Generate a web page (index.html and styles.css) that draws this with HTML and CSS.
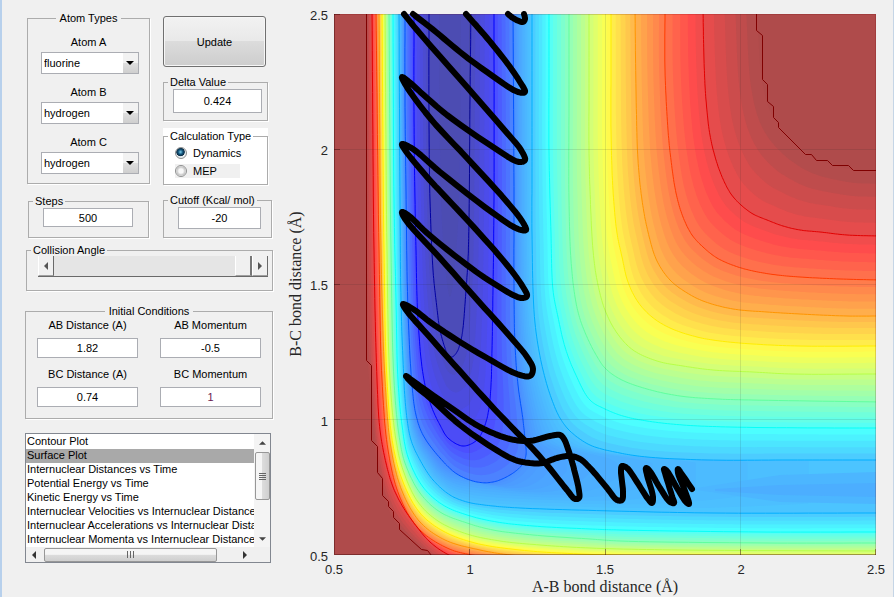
FILE: index.html
```html
<!DOCTYPE html>
<html lang="en">
<head>
<meta charset="utf-8">
<title>Reaction Dynamics</title>
<link rel="stylesheet" href="styles.css">
</head>
<body>
<main class="app">
  <form class="controls">
    <div class="pair">
      <fieldset class="group atoms">
        <legend class="centered">Atom Types</legend>
        <label for="atomA">Atom A</label>
        <span class="drop"><select id="atomA"><option>fluorine</option><option>hydrogen</option></select></span>
        <label for="atomB">Atom B</label>
        <span class="drop"><select id="atomB"><option>hydrogen</option><option>fluorine</option></select></span>
        <label for="atomC">Atom C</label>
        <span class="drop"><select id="atomC"><option>hydrogen</option><option>fluorine</option></select></span>
      </fieldset>
      <div class="side">
        <button type="button" class="update">Update</button>
        <fieldset class="group delta">
          <legend>Delta Value</legend>
          <input type="text" aria-label="Delta Value" value="0.424">
        </fieldset>
        <div class="white">
          <fieldset class="group calc">
            <legend>Calculation Type</legend>
            <label class="radio"><input type="radio" name="calc" checked>Dynamics</label>
            <label class="radio shaded"><input type="radio" name="calc">MEP</label>
          </fieldset>
        </div>
      </div>
    </div>
    <div class="pair second">
      <fieldset class="group steps">
        <legend>Steps</legend>
        <input type="text" aria-label="Steps" value="500">
      </fieldset>
      <fieldset class="group cutoff">
        <legend>Cutoff (Kcal/ mol)</legend>
        <input type="text" aria-label="Cutoff (Kcal/ mol)" value="-20">
      </fieldset>
    </div>
    <fieldset class="group angle">
      <legend>Collision Angle</legend>
      <div class="slider">
        <button type="button" aria-label="Decrease"><svg viewBox="0 0 4 8"><path d="M4 0v8L0 4z"/></svg></button>
        <input type="range" aria-label="Collision Angle" min="0" max="180" value="180">
        <button type="button" aria-label="Increase"><svg viewBox="0 0 4 8"><path d="M0 0v8l4-4z"/></svg></button>
      </div>
    </fieldset>
    <fieldset class="group initial">
      <legend class="centered">Initial Conditions</legend>
      <div class="cells">
        <div class="cell"><label for="abd">AB Distance (A)</label><input id="abd" type="text" value="1.82"></div>
        <div class="cell"><label for="abm">AB Momentum</label><input id="abm" type="text" value="-0.5"></div>
        <div class="cell"><label for="bcd">BC Distance (A)</label><input id="bcd" type="text" value="0.74"></div>
        <div class="cell"><label for="bcm">BC Momentum</label><input id="bcm" class="plum" type="text" value="1"></div>
      </div>
    </fieldset>
    <div class="listbox">
      <select size="8" aria-label="Plot type">
        <option>Contour Plot</option>
        <option selected>Surface Plot</option>
        <option>Internuclear Distances vs Time</option>
        <option>Potential Energy vs Time</option>
        <option>Kinetic Energy vs Time</option>
        <option>Internuclear Velocities vs Internuclear Distance</option>
        <option>Internuclear Accelerations vs Internuclear Distance</option>
        <option>Internuclear Momenta vs Internuclear Distance</option>
      </select>
      <div class="vbar">
        <svg class="up" viewBox="0 0 8 4"><path d="M0 4h8L4 0z"/></svg>
        <span class="vthumb"><i></i><i></i><i></i><i></i></span>
        <svg class="down" viewBox="0 0 8 4"><path d="M0 0h8L4 4z"/></svg>
      </div>
      <div class="hbar">
        <svg class="left" viewBox="0 0 4 8"><path d="M4 0v8L0 4z"/></svg>
        <span class="hthumb"><i></i><i></i><i></i></span>
        <svg class="right" viewBox="0 0 4 8"><path d="M0 0v8l4-4z"/></svg>
      </div>
      <div class="corner"></div>
    </div>
  </form>
  <section class="plot">
    <svg viewBox="287 0 606 597" role="img" aria-label="Potential energy contours with trajectory">
      <defs><clipPath id="box"><rect x="334" y="14" width="542" height="541"/></clipPath></defs>
      <g clip-path="url(#box)">
        <rect x="334" y="14" width="542" height="541" fill="#af4b4b"/>
        <g id="bands"></g>
        <g id="lines" fill="none" stroke-width="1"></g>
        <path class="grid" d="M469.5 14V555M605.5 14V555M740.5 14V555M334 149.5H876M334 284.5H876M334 419.5H876"/>
      </g>
      <path class="axis" d="M334.5 14V554.5H876M334 14.5H340M334 149.5H340M334 284.5H340M334 419.5H340M469.5 555V549M605.5 555V549M740.5 555V549M875.5 555V549"/>
      <path class="edge" d="M334 14.5H875.5V555"/>
      <g id="track"></g>
      <g class="ticks end">
        <text x="328" y="20">2.5</text><text x="328" y="155">2</text><text x="328" y="290">1.5</text><text x="328" y="426">1</text><text x="328" y="561">0.5</text>
      </g>
      <g class="ticks mid">
        <text x="334" y="574">0.5</text><text x="470" y="574">1</text><text x="605" y="574">1.5</text><text x="741" y="574">2</text><text x="876" y="574">2.5</text>
      </g>
      <text class="name" x="605" y="592">A-B bond distance (Å)</text>
      <text class="name" transform="translate(301 284) rotate(-90)">B-C bond distance (Å)</text>
    </svg>
  </section>
</main>
<script src="plot.js"></script>
</body>
</html>
```
FILE: styles.css
```css
* { box-sizing: border-box; }
body {
  margin: 0;
  background: #f0f0f0;
  color: #000;
  font: 11px/12px "Liberation Sans", Arial, sans-serif;
}
button, input, select { font: inherit; color: inherit; margin: 0; }
.app {
  display: grid;
  grid-template-columns: 285px 1fr;
  min-height: 100vh;
  border-left: 2px solid #b7d0ec;
  border-right: 1px solid #c5d5e6;
}
.controls {
  display: flex;
  flex-direction: column;
  padding: 12px 14px 0 23px;
}
.pair { display: grid; grid-template-columns: 123px 109px; gap: 13px; margin-left: 2px; }
.second { margin-top: 9px; }
.group {
  min-width: 0;
  margin: 0;
  padding: 0;
  border: 1px solid #acacac;
  box-shadow: 1px 1px 0 #fff;
}
.group legend { margin-left: 4px; padding: 0 2px; line-height: 13px; }
.group legend.centered { margin: 0 auto; padding: 0 4px; }
.group input[type="text"] {
  display: block;
  border: 1px solid #abadb3;
  border-radius: 0;
  background: #fff;
  text-align: center;
  padding: 0;
  outline: 0;
}
.atoms { height: 172px; text-align: center; }
.atoms label { display: block; margin: 11px 0 4px; }
.atoms .drop + label { margin-top: 12px; }
.drop { position: relative; display: block; width: 98px; margin: 0 auto 0 13px; }
.drop select {
  appearance: none;
  display: block;
  width: 100%;
  height: 22px;
  border: 1px solid #abadb3;
  border-radius: 0;
  background: #fff;
  padding: 0 18px 0 2px;
}
.drop::before {
  content: "";
  position: absolute;
  inset: 1px 1px 1px auto;
  width: 15px;
  background: linear-gradient(#f2f2f2 48%, #dedede 52%, #cfcfcf);
  pointer-events: none;
}
.drop::after {
  content: "";
  position: absolute;
  right: 5px;
  top: 9px;
  border: 4px solid transparent;
  border-top-color: #000;
  border-bottom: 0;
  pointer-events: none;
}
.side { display: flex; flex-direction: column; width: 105px; padding-top: 4px; }
.update {
  height: 51px;
  width: 103px;
  border: 1px solid #707070;
  border-radius: 3px;
  background: linear-gradient(#f2f2f2, #e9e9e9 48%, #dcdcdc 49%, #cdcdcd);
  box-shadow: inset 0 0 0 1px #f6f6f6;
}
.delta { margin-top: 9px; height: 45px; }
.delta input { width: 89px; height: 24px; margin: 0 0 0 9px; }
.white { background: #fff; margin-top: 7px; padding-top: 2px; }
.calc { height: 55px; }
.radio { display: flex; align-items: center; gap: 6px; height: 17px; margin-left: 11px; padding-top: 2px; }
.radio.shaded { background: #f0f0f0; width: 65px; height: 14px; margin-top: 4px; padding: 0; }
.radio input {
  appearance: none;
  width: 12px;
  height: 12px;
  border: 1px solid #8e8f8f;
  border-radius: 50%;
  background: radial-gradient(#f8f8f8 30%, #c4c4c4 60%, #f4f4f4 70%);
}
.radio input:checked { background: radial-gradient(circle at 45% 40%, #7fd0ee 0, #12557c 28%, #0b2c45 48%, #e8eef0 56%); }
.steps { height: 43px; margin: 1px 1px 0; }
.steps input { width: 90px; height: 19px; margin: 0 0 0 14px; }
.cutoff { height: 44px; }
.cutoff input { width: 83px; height: 22px; margin: 0 0 0 14px; }
.angle { margin: 6px 0 0 1px; height: 47px; }
.slider {
  display: grid;
  grid-template-columns: 16px 1fr 16px;
  height: 21px;
  margin: -1px 4px 0 11px;
  border-bottom: 1px solid #696969;
}
.slider button {
  display: grid;
  place-items: center;
  border: 0;
  border-left: 1px solid #fff;
  border-right: 1px solid #696969;
  border-bottom: 1px solid #a0a0a0;
  background: #f0f0f0;
  padding: 0;
}
.slider svg { width: 4px; height: 8px; fill: #555; }
.slider input { appearance: none; width: 100%; height: 20px; background: #e5e5e5; }
.slider input::-webkit-slider-thumb {
  appearance: none;
  width: 17px;
  height: 20px;
  background: #f0f0f0;
  border-left: 1px solid #fff;
  border-right: 2px solid #777;
  border-bottom: 1px solid #a0a0a0;
}
.initial { margin-top: 14px; height: 114px; }
.cells { display: grid; grid-template-columns: 101px 101px; gap: 10px 22px; margin: 1px 0 0 11px; }
.cell { text-align: center; }
.cell label { display: block; margin-bottom: 7px; }
.cell input { width: 100%; height: 20px; }
.group .plum { color: #6a2050; }
.listbox {
  display: grid;
  grid-template: 113px 15px / 1fr 16px;
  width: 246px;
  margin-top: 14px;
  border: 1px solid #828790;
}
.listbox select {
  width: 100%;
  height: 113px;
  padding: 1px 0 0;
  border: 0;
  border-radius: 0;
  outline: 0;
  background: #fff;
  overflow: hidden;
  scrollbar-width: none;
}
.listbox option { height: 14px; min-height: 14px; padding: 0 1px; line-height: 14px; color: #000; }
.listbox option:checked { background: #a9a9a9 linear-gradient(#a9a9a9, #a9a9a9); color: #000; }
.vbar, .hbar { display: flex; align-items: center; background: #f0f0f0; }
.vbar { flex-direction: column; padding: 7px 0 6px; background: #f4f4f4; }
.vthumb, .hthumb {
  display: flex;
  align-items: center;
  justify-content: center;
  border: 1px solid #979797;
  border-radius: 2px;
}
.vthumb { flex-direction: column; gap: 1px; width: 15px; height: 48px; margin: 7px 0 auto; background: linear-gradient(90deg, #f5f5f5 45%, #dcdcdc 50%, #cfcfcf); }
.vthumb i { width: 7px; height: 1px; background: #666; }
.hthumb { gap: 2px; width: 173px; height: 14px; background: linear-gradient(#f5f5f5 45%, #dcdcdc 50%, #cfcfcf); }
.hthumb i { width: 1px; height: 7px; background: #666; }
.up, .down { width: 7px; height: 4px; fill: #444; }
.hbar { padding: 0 7px 0 6px; gap: 8px; }
.left, .right { width: 4px; height: 8px; fill: #333; }
.right { margin-left: auto; }
.corner { background: #f0f0f0; }
.plot svg { display: block; width: 100%; }
.grid { fill: none; stroke: #262626; stroke-opacity: 0.12; }
.axis { fill: none; stroke: #300; stroke-opacity: 0.4; }
.edge { fill: none; stroke: #600; stroke-opacity: 0.18; }
.ticks { font-size: 13px; fill: #262626; }
.end { text-anchor: end; }
.mid { text-anchor: middle; }
.name { font: 16px "Liberation Serif", serif; fill: #262626; text-anchor: middle; }
#track { fill: none; stroke: #000; stroke-width: 6; stroke-linecap: round; stroke-linejoin: round; }
```
FILE: plot.js
```js
// Contours that open towards the top-right plateau, levels 4 to 12.
const upper = {
  4: [[532,10],[532,100],[532,180],[532,233],[535,323],[543,370],[552,400],[560,418],[570,431],[590,445],[620,453],[647,457],[707,460],[790,460],[880,460]],
  5: [[549,10],[549,80],[549,150],[551,233],[553,290],[558,317],[565,347],[575,373],[590,400],[605,409],[623,416],[647,421],[683,425],[730,427],[842,428],[880,428]],
  6: [[569,10],[569,100],[569,200],[571,260],[575,297],[580,319],[587,337],[595,353],[605,368],[620,379],[647,389],[680,396],[717,399],[752,400],[880,402]],
  7: [[589,10],[589,90],[589,150],[590,190],[593,250],[597,280],[605,310],[617,333],[633,350],[657,361],[683,366],[713,370],[753,372],[792,374],[880,374]],
  8: [[611,10],[611,70],[611,130],[613,190],[617,233],[622,257],[628,282],[638,302],[652,317],[670,328],[697,337],[720,341],[753,344],[799,346],[880,346]],
  9: [[635,10],[636,90],[638,160],[642,200],[648,232],[657,261],[670,280],[684,291],[703,301],[733,309],[767,312],[800,314],[847,316],[880,316]],
  10: [[665,10],[665,70],[668,130],[671,160],[676,193],[683,217],[692,235],[703,247],[717,258],[735,266],[753,271],[777,275],[800,277],[840,279],[880,280]],
  11: [[703,10],[704,60],[706,100],[710,135],[716,160],[723,179],[731,194],[741,205],[753,214],[767,220],[783,226],[800,230],[820,232],[847,235],[880,236]],
  12: [[757,10],[762,80],[772,115],[790,138],[815,158],[850,169],[880,171]]
};
// The repulsive wall along the left and bottom, levels 4 to 12.
const wall = {
  4: [[399,10],[400,200],[401,300],[403,360],[406,410],[411,440],[420,460],[433,480],[450,495],[467,502],[493,506],[520,508],[613,511],[713,513],[880,513]],
  5: [[393,10],[394,200],[396,300],[398,380],[402,425],[408,457],[423,487],[443,505],[467,515],[497,522],[533,526],[590,529],[620,530],[760,532],[880,532]],
  6: [[389,10],[391,250],[394,380],[399,435],[405,463],[420,493],[440,512],[467,523],[493,530],[533,535],[590,539],[620,541],[768,543],[880,543]],
  7: [[385,10],[387,250],[390,380],[396,440],[403,470],[418,502],[438,521],[467,534],[500,541],[540,545],[590,548],[680,550],[880,551]],
  8: [[382,10],[384,250],[387,380],[393,445],[403,482],[420,513],[443,531],[475,543],[520,550],[580,554],[880,561]],
  9: [[379,10],[381,250],[385,380],[391,448],[402,491],[420,522],[445,540],[480,550],[520,556],[880,575]],
  10: [[376,10],[379,250],[382,380],[388,450],[399,495],[418,528],[445,547],[472,555],[880,590]],
  11: [[372,10],[374,250],[377,380],[380,430],[386,463],[393,487],[403,507],[417,527],[430,542],[447,554],[500,575],[880,610]],
  12: [[367,10],[367,350],[371,400],[375,450],[382,490],[395,522],[421,549],[440,563],[500,590],[880,640]]
};
// Closed wells, each as four stretches: left side, floor, return, right side.
const wells = {
  1: [[[429,10],[429,120],[430,200],[433,270],[436,300],[440,330],[445,348]],
      [[445,348],[448,355],[452,357],[457,352]],
      [[457,352],[461,340],[463,328]],
      [[463,328],[466,290],[468,260],[469,220],[470,100],[471,10]]],
  2: [[[414,10],[414,120],[415,200],[416,250],[418,320],[424,380],[432,408],[440,425]],
      [[440,425],[448,438],[463,446],[477,440]],
      [[477,440],[485,425],[489,408]],
      [[489,408],[491,385],[492,350],[493,290],[494,200],[494,10]]],
  3: [[[405,10],[405,100],[406,190],[408,310],[412,385],[416,415],[423,435],[440,458]],
      [[440,458],[457,474],[477,482],[493,482],[510,475],[522,465]],
      [[522,465],[526,455],[525,440]],
      [[525,440],[523,420],[518,385],[515,345],[514,290],[514,200],[513,10]]]
};
const ridge = [[756,10],[756,30],[762,35],[762,79],[767,84],[767,101],[773,106],[773,117],[778,122],[778,127],[805,154],[811,154],[816,160],[827,160],[832,165],[848,165],[853,170],[880,170]];
const cliff = [[366,10],[366,360],[371,365],[371,440],[377,446],[377,472],[382,478],[382,495],[388,501],[388,506],[393,511],[393,517],[399,523],[399,529],[421,549],[427,550],[431,555]];
const tracks = [
  [[508,14],[513,18],[523,22],[525,19],[524,14]],
  [[466,14],[487,38],[507,63],[520,82],[525,92],[518,92],[487,72],[460,52],[436,32],[413,14]],
  [[404,14],[417,30],[467,87],[507,133],[521,150],[525,160],[519,162],[493,147],[447,115],[427,98],[408,81],[402,77],[405,84],[430,118],[467,158],[507,202],[522,221],[526,230],[518,229],[493,213],[440,172],[413,149],[402,144],[405,150],[427,177],[440,191],[480,234],[507,265],[523,287],[527,296],[521,298],[493,283],[467,265],[427,233],[408,215],[402,212],[405,219],[440,258],[480,303],[507,333],[527,357],[533,369],[530,376],[517,374],[487,358],[460,342],[430,322],[413,309],[403,304],[406,310],[427,334],[467,379],[500,415],[532,448],[547,465],[567,490],[575,499],[579,498],[579,491],[575,473],[570,455],[564,439],[560,435],[550,436],[530,441],[510,439],[480,427],[447,405],[427,391],[413,381],[406,376],[411,382],[430,398],[460,425],[493,448],[515,460],[530,463],[543,463],[557,458],[570,456],[580,459],[590,468],[607,488],[617,500],[622,500],[623,492],[621,470],[622,466],[627,468],[637,482],[648,499],[652,503],[653,497],[647,475],[646,468],[649,470],[660,488],[670,502],[674,503],[672,496],[665,473],[664,469],[667,471],[677,488],[686,502],[689,504],[685,491],[678,473],[678,469],[681,473],[692,489]]
];

const NS = "http://www.w3.org/2000/svg";
const bands = document.getElementById("bands");
const lines = document.getElementById("lines");

function draw(parent, points, closed, attrs) {
  const p = document.createElementNS(NS, "path");
  p.setAttribute("d", "M" + points.map(q => q[0].toFixed(1) + " " + q[1].toFixed(1)).join("L") + (closed ? "Z" : ""));
  for (const k in attrs) p.setAttribute(k, attrs[k]);
  parent.appendChild(p);
}

// Centripetal spline through the points; long and short stretches mix safely.
function smooth(pts, n = 12) {
  const out = [];
  for (let i = 0; i < pts.length - 1; i++) {
    const p1 = pts[i], p2 = pts[i + 1];
    const p0 = pts[i - 1] || [2 * p1[0] - p2[0], 2 * p1[1] - p2[1]];
    const p3 = pts[i + 2] || [2 * p2[0] - p1[0], 2 * p2[1] - p1[1]];
    const gap = (a, b) => Math.sqrt(Math.hypot(a[0] - b[0], a[1] - b[1])) || 0.01;
    const t1 = gap(p0, p1), t2 = t1 + gap(p1, p2), t3 = t2 + gap(p2, p3);
    const mix = (a, b, ta, tb, t) => [0, 1].map(j => (a[j] * (tb - t) + b[j] * (t - ta)) / (tb - ta));
    for (let s = 0; s < n; s++) {
      const t = t1 + (t2 - t1) * s / n;
      const a = mix(p0, p1, 0, t1, t), b = mix(p1, p2, t1, t2, t), c = mix(p2, p3, t2, t3, t);
      out.push(mix(mix(a, b, 0, t2, t), mix(b, c, t1, t3, t), t1, t2, t));
    }
  }
  out.push(pts[pts.length - 1]);
  return out;
}

const level = k => 0.035 + 0.0868 * (k - 1);
function jet(t, wash) {
  const c = [3, 2, 1].map(m => Math.max(0, Math.min(1, 1.5 - Math.abs(4 * t - m))));
  return "rgb(" + c.map(v => Math.round(wash ? 76 + 179 * v : 255 * v)).join(",") + ")";
}

// Distance of a curve from the plateau corner along evenly spread rays.
const corner = [880, 10], RAYS = 180;
function polar(pts) {
  const s = smooth(pts).map(p => [Math.atan2(p[1] - corner[1], corner[0] - p[0]), Math.hypot(p[0] - corner[0], p[1] - corner[1])]);
  const out = [];
  let j = 0;
  for (let i = 0; i <= RAYS; i++) {
    const a = Math.PI / 2 * i / RAYS;
    while (j < s.length - 2 && s[j + 1][0] < a) j++;
    const f = (a - s[j][0]) / (s[j + 1][0] - s[j][0] || 1);
    out.push(s[j][1] + f * (s[j + 1][1] - s[j][1]));
  }
  return out;
}
const cartesian = rs => rs.map((r, i) => {
  const a = Math.PI / 2 * i / RAYS;
  return [corner[0] - r * Math.cos(a), corner[1] + r * Math.sin(a)];
});
const blend = (a, b, f) => a.map((v, i) => v + (b[i] - v) * f);

const STEPS = 5;
for (let k = 12; k > 4; k--) {
  const u1 = polar(upper[k]), u0 = polar(upper[k - 1]);
  const w1 = polar(wall[k]), w0 = polar(wall[k - 1]);
  for (let s = 0; s < STEPS; s++) {
    const f = s / STEPS;
    const edge = cartesian(blend(u1, u0, f)).concat(cartesian(blend(w1, w0, f)).reverse());
    draw(bands, edge, true, { fill: jet(level(k - (s + 0.5) / STEPS), true) });
  }
}

// Resample a stretch to evenly spaced points.
function even(pts, n = 40) {
  const s = smooth(pts), d = [0];
  for (let i = 1; i < s.length; i++) d.push(d[i - 1] + Math.hypot(s[i][0] - s[i - 1][0], s[i][1] - s[i - 1][1]));
  const out = [];
  let j = 0;
  for (let i = 0; i <= n; i++) {
    const t = d[d.length - 1] * i / n;
    while (j < s.length - 2 && d[j + 1] < t) j++;
    const f = (t - d[j]) / (d[j + 1] - d[j] || 1);
    out.push(blend(s[j], s[j + 1], f));
  }
  return out;
}
const w4 = wall[4], u4 = upper[4].slice().reverse();
const rings = {
  4: [w4.slice(0, 8), w4.slice(7), u4.slice(0, 7), u4.slice(6)].map(p => even(p)).flat()
};
for (const k of [1, 2, 3]) rings[k] = wells[k].map(p => even(p)).flat();
for (let k = 4; k > 1; k--) {
  const steps = k === 4 ? 14 : STEPS;
  for (let s = 0; s < steps; s++) {
    const f = s / steps;
    // The open end of the valley flattens out, so its far points fall back sooner.
    const ring = rings[k].map((p, i) => {
      const far = k === 4 ? Math.max(0, (p[0] - 440) / 440) : 0;
      return blend(p, rings[k - 1][i], 1 - Math.pow(1 - f, 1 + 2 * far));
    });
    draw(bands, ring, true, { fill: jet(level(k - (s + 0.5) / steps), true) });
  }
}
draw(bands, rings[1], true, { fill: "rgb(76,76,184)" });
draw(bands, smooth([[439,10],[440,150],[443,240],[450,297],[457,240],[460,150],[461,10]]), true, { fill: "rgb(76,76,178)" });
draw(bands, [[690,489],[780,475],[880,472],[880,504],[780,502]], true, { fill: "rgb(76,182,255)" });
draw(bands, [[715,489],[780,485],[880,483],[880,497],[780,495],[715,491]], true, { fill: "rgb(76,174,255)" });

for (let k = 4; k < 12; k++) {
  draw(lines, smooth(upper[k]), false, { stroke: jet(level(k)) });
  draw(lines, smooth(wall[k]), false, { stroke: jet(level(k)) });
}
for (const k of [1, 2, 3]) draw(lines, smooth(wells[k].map((p, i) => i ? p.slice(1) : p).flat()), false, { stroke: jet(level(k)) });
for (const p of [ridge, cliff]) draw(lines, p.map(q => [q[0] + 0.5, q[1] + 0.5]), false, { stroke: "#800000" });
for (const t of tracks) draw(document.getElementById("track"), smooth(t, 6), false, {});
```
